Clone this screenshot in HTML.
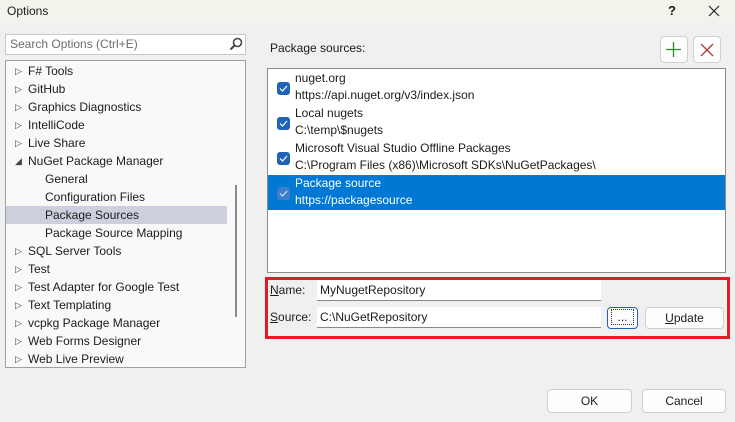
<!DOCTYPE html>
<html><head><style>
*{margin:0;padding:0;box-sizing:border-box}
body{width:735px;height:422px;background:#f0f0f0;font-family:"Segoe UI","Liberation Sans",sans-serif;font-size:12px;color:#1b1b1b;position:relative;overflow:hidden}
.abs{position:absolute}
.title{left:0;top:0;width:735px;height:27px;background:linear-gradient(#f3f5ec,#f1f3ed 80%,#f0f0f0)}
.tree{left:5px;top:60px;width:241px;height:308px;background:#f9f9f9;border:1px solid #a0a0a0}
.row{position:absolute;left:0;height:18px;line-height:18px;white-space:nowrap}
.tri{position:absolute;left:9px;font-size:9px;color:#444}
.list{left:267px;top:68px;width:459px;height:205px;background:#fff;border:1px solid #8a8a8a}
.item{position:absolute;left:0;width:457px;height:35px}
.item .t{position:absolute;left:27px;line-height:17px}
.cb{position:absolute;left:9px;top:12px;width:13px;height:13px;background:#1f63b8;border-radius:3px}
.cb svg{position:absolute;left:2px;top:3px}
.inp{background:#fff;border-bottom:1px solid #888;height:21px;line-height:20px;padding-left:3px}
.btn{background:#fdfdfd;border:1px solid #cfcfcf;border-radius:4px;text-align:center}
</style></head><body>
<div class="abs title"></div>
<div class="abs" style="left:7px;top:4px;font-size:12px">Options</div>
<div class="abs" style="left:668px;top:3px;font-size:13px;font-weight:bold">?</div>
<svg class="abs" style="left:708px;top:5px" width="12" height="12"><path d="M1 1L11 11M11 1L1 11" stroke="#222" stroke-width="1.2"/></svg>

<div class="abs" style="left:5px;top:34px;width:241px;height:21px;background:#fff;border:1px solid #c8c8c8;color:#6d6d6d;padding-left:4px;line-height:19px">Search Options (Ctrl+E)</div>
<svg class="abs" style="left:229px;top:37px" width="14" height="14"><circle cx="8.5" cy="5.5" r="4" fill="none" stroke="#444" stroke-width="1.6"/><path d="M6 8L1.5 12.5" stroke="#444" stroke-width="2"/></svg>

<div class="abs tree">
<div class="abs" style="left:229px;top:124px;width:2px;height:132px;background:#8a8a8a"></div>
<div class="row" style="top:145px;width:221px;background:#cdd0dc"></div>
<div class="row" style="top:1px"><span class="tri">▷</span><span style="padding-left:22px">F# Tools</span></div>
<div class="row" style="top:19px"><span class="tri">▷</span><span style="padding-left:22px">GitHub</span></div>
<div class="row" style="top:37px"><span class="tri">▷</span><span style="padding-left:22px">Graphics Diagnostics</span></div>
<div class="row" style="top:55px"><span class="tri">▷</span><span style="padding-left:22px">IntelliCode</span></div>
<div class="row" style="top:73px"><span class="tri">▷</span><span style="padding-left:22px">Live Share</span></div>
<div class="row" style="top:91px"><span class="tri">◢</span><span style="padding-left:22px">NuGet Package Manager</span></div>
<div class="row" style="top:109px;padding-left:39px">General</div>
<div class="row" style="top:127px;padding-left:39px">Configuration Files</div>
<div class="row" style="top:145px;padding-left:39px">Package Sources</div>
<div class="row" style="top:163px;padding-left:39px">Package Source Mapping</div>
<div class="row" style="top:181px"><span class="tri">▷</span><span style="padding-left:22px">SQL Server Tools</span></div>
<div class="row" style="top:199px"><span class="tri">▷</span><span style="padding-left:22px">Test</span></div>
<div class="row" style="top:217px"><span class="tri">▷</span><span style="padding-left:22px">Test Adapter for Google Test</span></div>
<div class="row" style="top:235px"><span class="tri">▷</span><span style="padding-left:22px">Text Templating</span></div>
<div class="row" style="top:253px"><span class="tri">▷</span><span style="padding-left:22px">vcpkg Package Manager</span></div>
<div class="row" style="top:271px"><span class="tri">▷</span><span style="padding-left:22px">Web Forms Designer</span></div>
<div class="row" style="top:289px"><span class="tri">▷</span><span style="padding-left:22px">Web Live Preview</span></div>
</div>

<div class="abs" style="left:270px;top:41px">Package sources:</div>
<div class="abs btn" style="left:660px;top:36px;width:28px;height:27px"></div>
<svg class="abs" style="left:666px;top:42px" width="15" height="15"><path d="M7.5 0V15M0 7.5H15" stroke="#2f8a2f" stroke-width="1.3"/></svg>
<div class="abs btn" style="left:693px;top:36px;width:28px;height:27px"></div>
<svg class="abs" style="left:700px;top:43px" width="14" height="14"><path d="M1 1L13 13M13 1L1 13" stroke="#b03a3a" stroke-width="1.3"/></svg>

<div class="abs list">
<div class="item" style="top:1px"><div class="cb"><svg width="9" height="7"><path d="M1 3.5L3.5 6L8 1" fill="none" stroke="#fff" stroke-width="1.2"/></svg></div><div class="t" style="top:0">nuget.org<br>https://api.nuget.org/v3/index.json</div></div>
<div class="item" style="top:36px"><div class="cb"><svg width="9" height="7"><path d="M1 3.5L3.5 6L8 1" fill="none" stroke="#fff" stroke-width="1.2"/></svg></div><div class="t" style="top:0">Local nugets<br>C:\temp\$nugets</div></div>
<div class="item" style="top:71px"><div class="cb"><svg width="9" height="7"><path d="M1 3.5L3.5 6L8 1" fill="none" stroke="#fff" stroke-width="1.2"/></svg></div><div class="t" style="top:0">Microsoft Visual Studio Offline Packages<br>C:\Program Files (x86)\Microsoft SDKs\NuGetPackages\</div></div>
<div class="item" style="top:106px;background:#0078d4;color:#fff"><div class="cb" style="background:#3c7fc8"><svg width="9" height="7"><path d="M1 3.5L3.5 6L8 1" fill="none" stroke="#cfe0f5" stroke-width="1.2"/></svg></div><div class="t" style="top:0">Package source<br>https://packagesource</div></div>
</div>

<div class="abs" style="left:265px;top:277px;width:465px;height:62px;border:3px solid #e31b23"></div>
<div class="abs" style="left:270px;top:283px"><u>N</u>ame:</div>
<div class="abs inp" style="left:317px;top:280px;width:284px">MyNugetRepository</div>
<div class="abs" style="left:270px;top:310px"><u>S</u>ource:</div>
<div class="abs inp" style="left:317px;top:307px;width:284px">C:\NuGetRepository</div>
<div class="abs btn" style="left:607px;top:307px;width:31px;height:22px;border:1px solid #1f63b8;line-height:18px"><span style="border:1px dotted #333;padding:0 5px">...</span></div>
<div class="abs btn" style="left:645px;top:307px;width:79px;height:22px;line-height:20px"><u>U</u>pdate</div>

<div class="abs btn" style="left:547px;top:389px;width:85px;height:24px;line-height:22px">OK</div>
<div class="abs btn" style="left:642px;top:389px;width:84px;height:24px;line-height:22px">Cancel</div>
</body></html>
